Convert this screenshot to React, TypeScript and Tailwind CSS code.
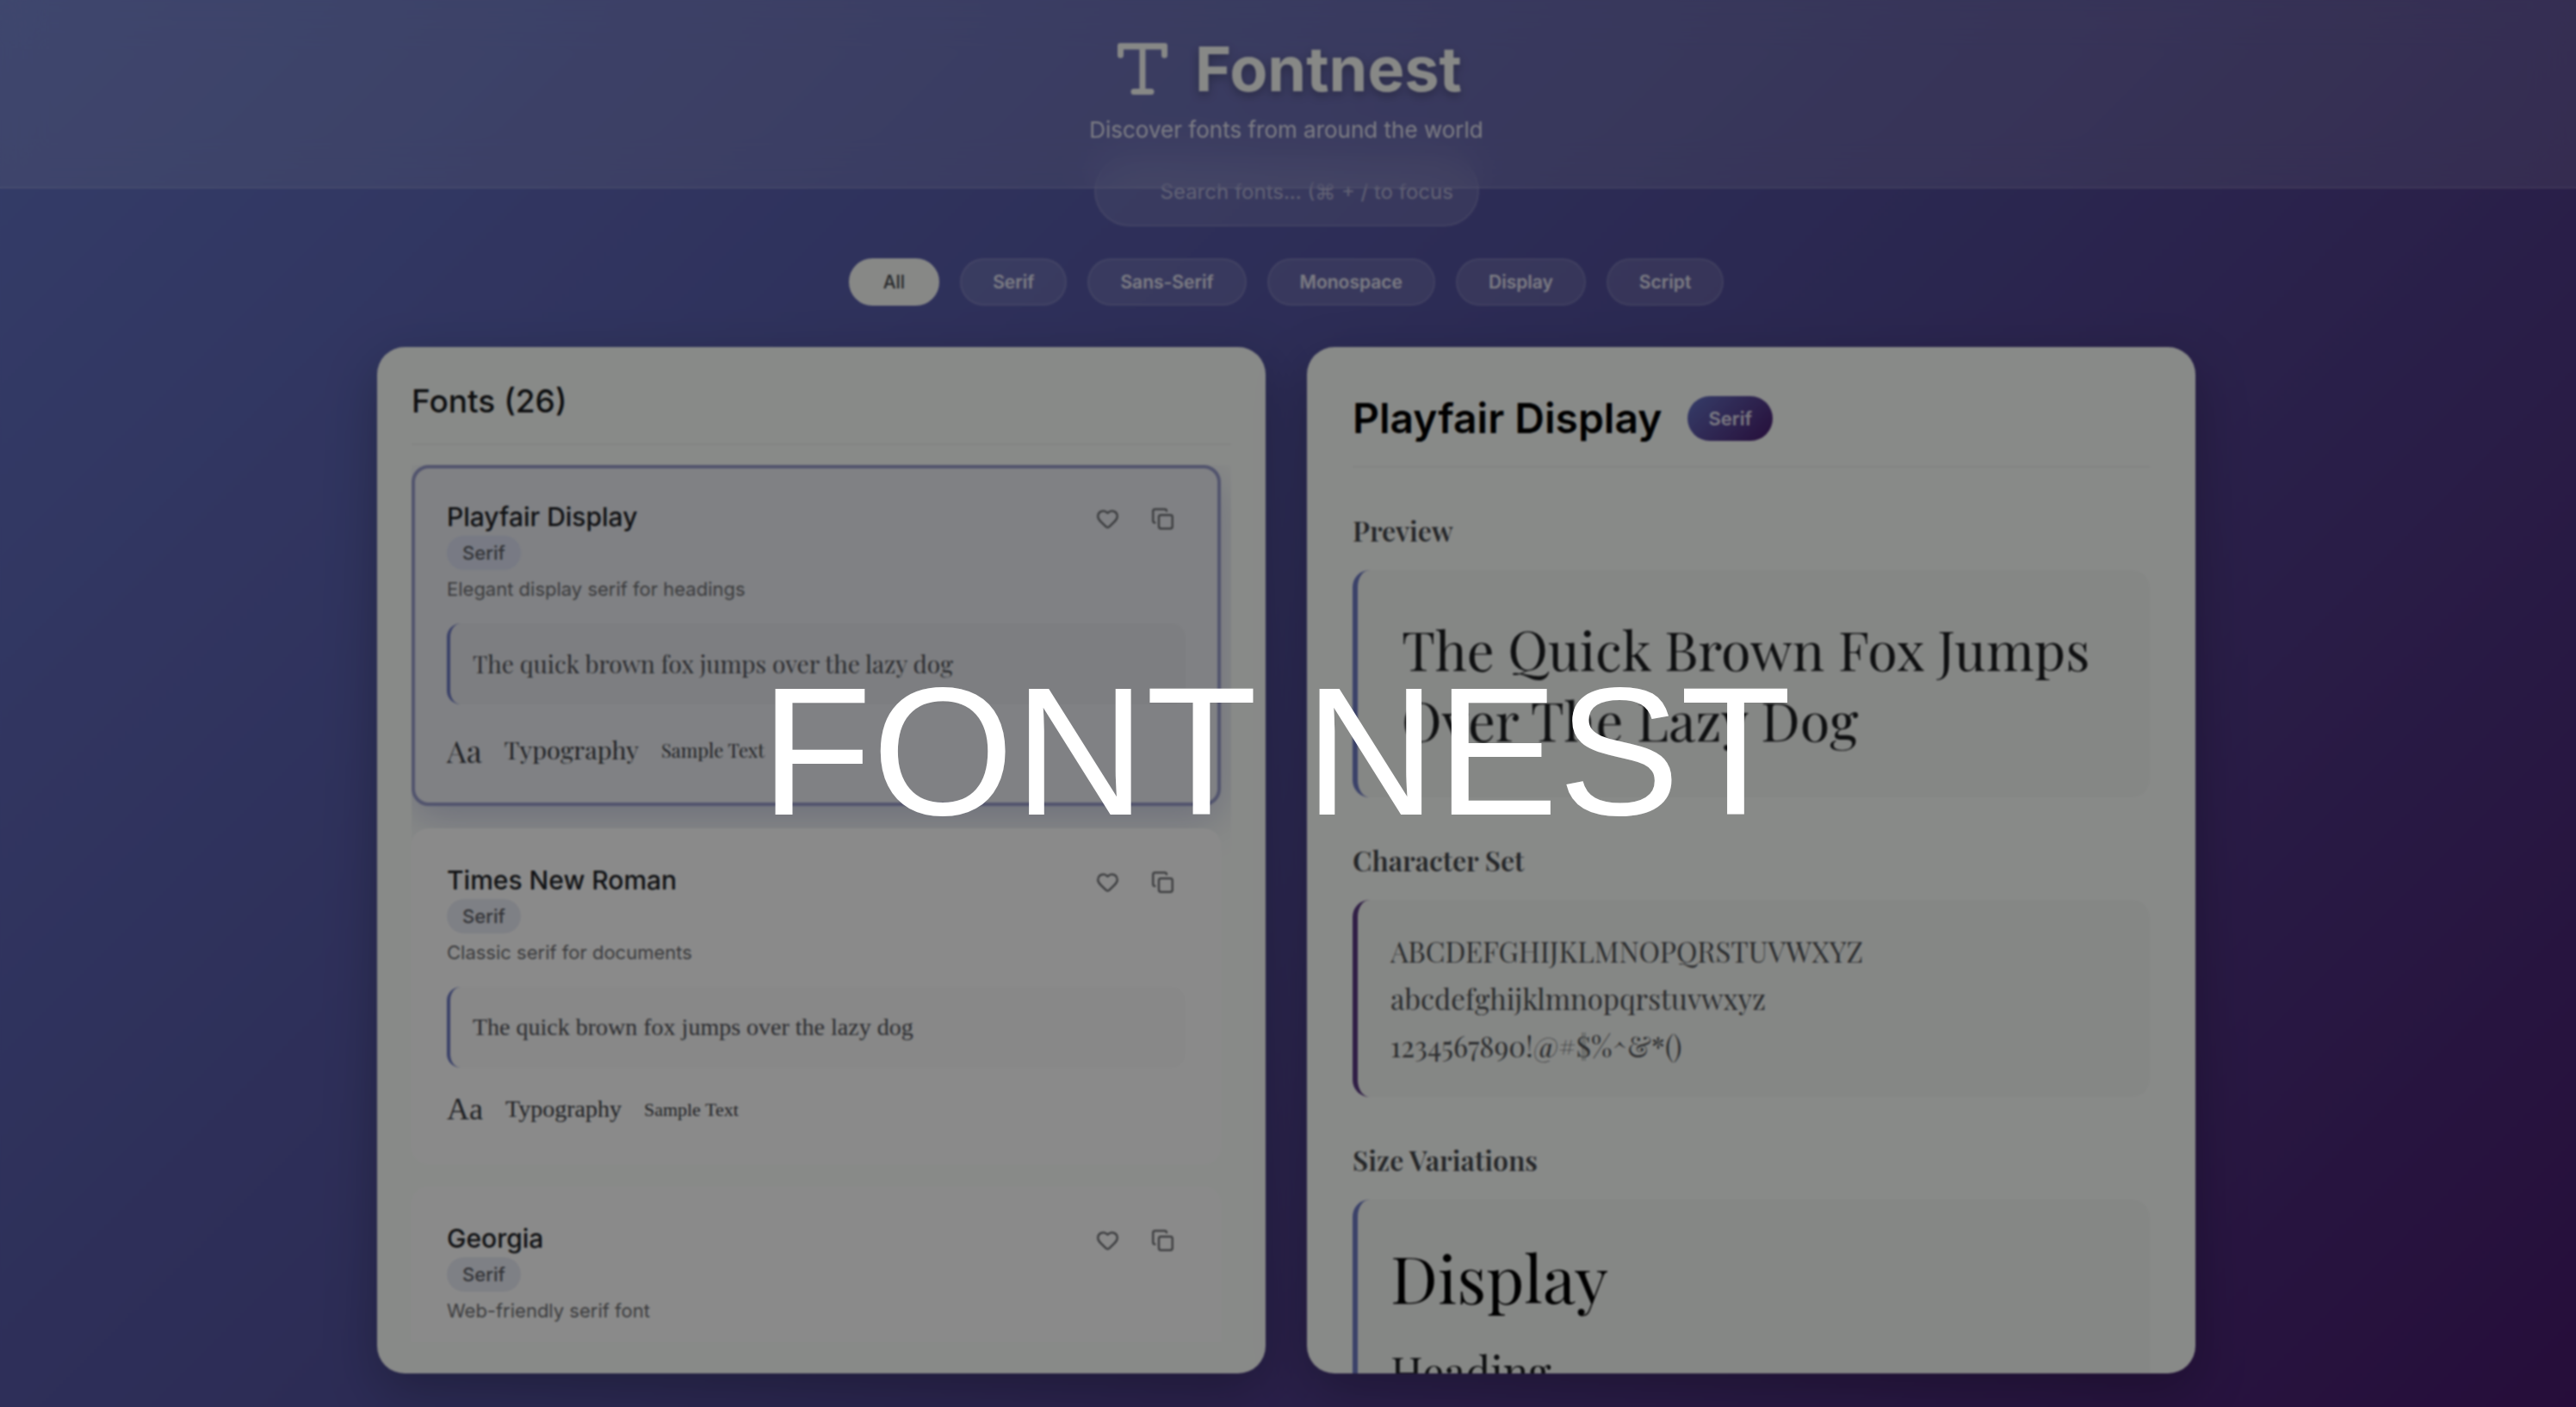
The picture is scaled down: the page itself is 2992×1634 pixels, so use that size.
import { Copy, Heart } from "lucide-react";

const playfair = "font-['Playfair_Display','Liberation_Serif',serif]";

type Font = {
  name: string;
  description: string;
  active?: boolean;
};

const fonts: Font[] = [
  { name: "Playfair Display", description: "Elegant display serif for headings", active: true },
  { name: "Times New Roman", description: "Classic serif for documents" },
  { name: "Georgia", description: "Web-friendly serif font" },
];

const categories = ["All", "Serif", "Sans-Serif", "Monospace", "Display", "Script"];

function Logo() {
  return (
    <svg viewBox="0 0 58 60" className="h-[60px] w-[58px] fill-current" aria-hidden="true">
      <path d="M3 0H55Q58 0 58 3V14A3.5 3.5 0 0 1 51 14V7.500H32.500V53H39A3.500 3.500 0 0 1 39 60H19A3.500 3.500 0 0 1 19 53H25.500V7.500H7V14A3.500 3.500 0 0 1 0 14V3Q0 0 3 0Z" />
    </svg>
  );
}

function Header() {
  return (
    <header className="relative z-10 flex flex-col items-center border-b-2 border-white/10 bg-white/12 pt-8 pr-1 pb-11 text-[#f6f8f5] backdrop-blur-xl">
      <div className="flex items-center gap-8 pl-2">
        <Logo />
        <h1 className="text-[72px] leading-[96px] font-bold [text-shadow:0_4px_12px_rgba(0,0,0,0.3)]">Fontnest</h1>
      </div>
      <p className="text-[26px] leading-[45px] text-white/80">Discover fonts from around the world</p>
    </header>
  );
}

function FontCard({ font }: { font: Font }) {
  const serif = font.active ? playfair : "font-['Times_New_Roman','Liberation_Serif',serif]";
  return (
    <article
      className={
        font.active
          ? "shrink-0 rounded-[20px] border-4 border-[#969ac8] bg-[#e9ebf0] px-[37px] pt-[34px] pb-9 shadow-[0_16px_48px_rgba(90,95,170,0.3)]"
          : "relative shrink-0 rounded-[20px] border-4 border-transparent bg-[#fcfcfc] bg-clip-border px-[37px] pt-[34px] pb-10"
      }
    >
      <div className="flex items-start justify-between">
        <div className="flex flex-col items-start">
          <h3 className="text-[30px] leading-[44px] font-medium text-[#202226]">{font.name}</h3>
          <span
            className={`rounded-full px-[18px] text-[22px] leading-10 font-medium text-[#5d5f66] ${font.active ? "bg-[#dadff0]" : "bg-[#e6e9f2]"}`}
          >
            Serif
          </span>
          <p className="mt-0.5 text-[22px] leading-10 text-[#6c6d70]">{font.description}</p>
        </div>
        <div className="flex gap-4 pr-[3px] text-[#66686c]">
          <button type="button" aria-label={"Add " + font.name + " to favourites"} className="grid size-12 place-items-center rounded-full">
            <Heart size={27} />
          </button>
          <button type="button" aria-label={"Copy " + font.name} className="grid size-12 place-items-center rounded-full">
            <Copy size={27} />
          </button>
        </div>
      </div>
      <p className={`${serif} mt-5 rounded-2xl border-l-4 border-[#6c78c0] bg-black/2 px-[26px] text-[28px] leading-[94px] text-[#505258]`}>
        The quick brown fox jumps over the lazy dog
      </p>
      <div className={`${serif} mt-7 flex items-center gap-[26px] text-[#3c3e44] ${font.active ? "h-[50px]" : "h-10"}`}>
        <span className="text-4xl">Aa</span>
        <span className={font.active ? "text-[29px]" : "text-[28px]"}>Typography</span>
        <span className="text-[22px]">Sample Text</span>
      </div>
    </article>
  );
}

function SectionTitle({ children }: { children: string }) {
  return <h3 className={`${playfair} text-[32px] leading-10 font-semibold text-[#44464a]`}>{children}</h3>;
}

export default function App() {
  return (
    <div className="relative flex h-screen flex-col overflow-hidden bg-linear-135 from-[#6070c0] via-[#4f4c96] to-[#45196a] font-['Inter',sans-serif]">
      <Header />

      <main className="flex min-h-0 flex-1 flex-col items-center pr-1 pb-[39px]">
        <label className="-mt-[38px] block shrink-0">
          <span className="sr-only">Search fonts</span>
          <input
            type="text"
            placeholder="Search fonts... (⌘ + / to focus"
            className="h-[82px] w-[447px] rounded-full border-2 border-white/10 bg-white/12 pr-2 pl-[75px] text-[24px] text-white placeholder:text-white/50"
          />
        </label>

        <nav aria-label="Categories" className="mt-[37px] flex shrink-0 gap-6">
          {categories.map((category, index) => (
            <button
              key={category}
              type="button"
              className={
                index === 0
                  ? "h-[55px] rounded-full border-2 border-[#f6f8f5] bg-[#f6f8f5] px-[38px] text-[21px] font-medium text-[#484a4d]"
                  : "h-[55px] rounded-full border-2 border-white/10 bg-white/12 px-[36px] text-[21px] font-semibold text-white/80"
              }
            >
              {category}
            </button>
          ))}
        </nav>

        <div className="mt-12 grid min-h-0 w-full max-w-[2112px] flex-1 grid-cols-2 gap-12">
          <section className="flex min-h-0 flex-col rounded-[32px] bg-[#f8fbf8] px-10 pt-9 pb-[37px] shadow-[0_20px_60px_rgba(0,0,0,0.25)]">
            <h2 className="shrink-0 border-b-2 border-black/4 pb-[22px] text-[37px] leading-[54px] font-medium text-[#1a1c1e]">
              Fonts (26)
            </h2>
            <div className="mt-[23px] flex min-h-0 flex-1 flex-col gap-[26px] overflow-hidden pr-3">
              {fonts.map((font) => (
                <FontCard key={font.name} font={font} />
              ))}
            </div>
          </section>

          <section className="flex min-h-0 flex-col overflow-hidden rounded-[32px] bg-[#f8fbf8] px-[53px] pt-[52px] shadow-[0_20px_60px_rgba(0,0,0,0.25)]">
            <div className="flex shrink-0 items-center gap-[30px] border-b-2 border-black/4 pb-6">
              <h2 className="text-5xl leading-[62px] font-semibold text-black">Playfair Display</h2>
              <span className="rounded-full bg-linear-135 from-[#6070c0] to-[#45196a] px-6 text-[22px] leading-[52px] font-semibold text-white/80">
                Serif
              </span>
            </div>

            <div className="mt-[53px] shrink-0">
              <SectionTitle>Preview</SectionTitle>
              <p
                className={`${playfair} mt-[26px] rounded-[20px] border-l-[6px] border-[#6c78c0] bg-black/2 px-[51px] py-[50px] text-[63px] leading-[82px] text-[#1c1e20]`}
              >
                The Quick Brown Fox Jumps Over The Lazy Dog
              </p>
            </div>

            <div className="mt-[53px] shrink-0">
              <SectionTitle>Character Set</SectionTitle>
              <div
                className={`${playfair} mt-[26px] rounded-[20px] border-l-[6px] border-[#5a3a80] bg-black/2 px-[38px] py-8 text-[33px] leading-[55px] text-[#505255]`}
              >
                <p>ABCDEFGHIJKLMNOPQRSTUVWXYZ</p>
                <p>abcdefghijklmnopqrstuvwxyz</p>
                <p>1234567890!@#$%^&amp;*()</p>
              </div>
            </div>

            <div className="mt-[53px] shrink-0">
              <SectionTitle>Size Variations</SectionTitle>
              <div className={`${playfair} mt-[26px] rounded-[20px] border-l-[6px] border-[#6c78c0] bg-black/2 px-[38px] py-9`}>
                <p className="text-[76px] leading-[108px] text-black">Display</p>
                <p className="mt-4 text-[50px] leading-[80px] text-[#1c1e20]">Heading</p>
              </div>
            </div>
          </section>
        </div>
      </main>

      <div className="absolute inset-0 z-20 flex items-center justify-center bg-black/45 backdrop-blur-[1px]">
        <p className="pt-28 pr-7 font-['Liberation_Sans',sans-serif] text-[212px] leading-none text-white">FONT NEST</p>
      </div>
    </div>
  );
}
